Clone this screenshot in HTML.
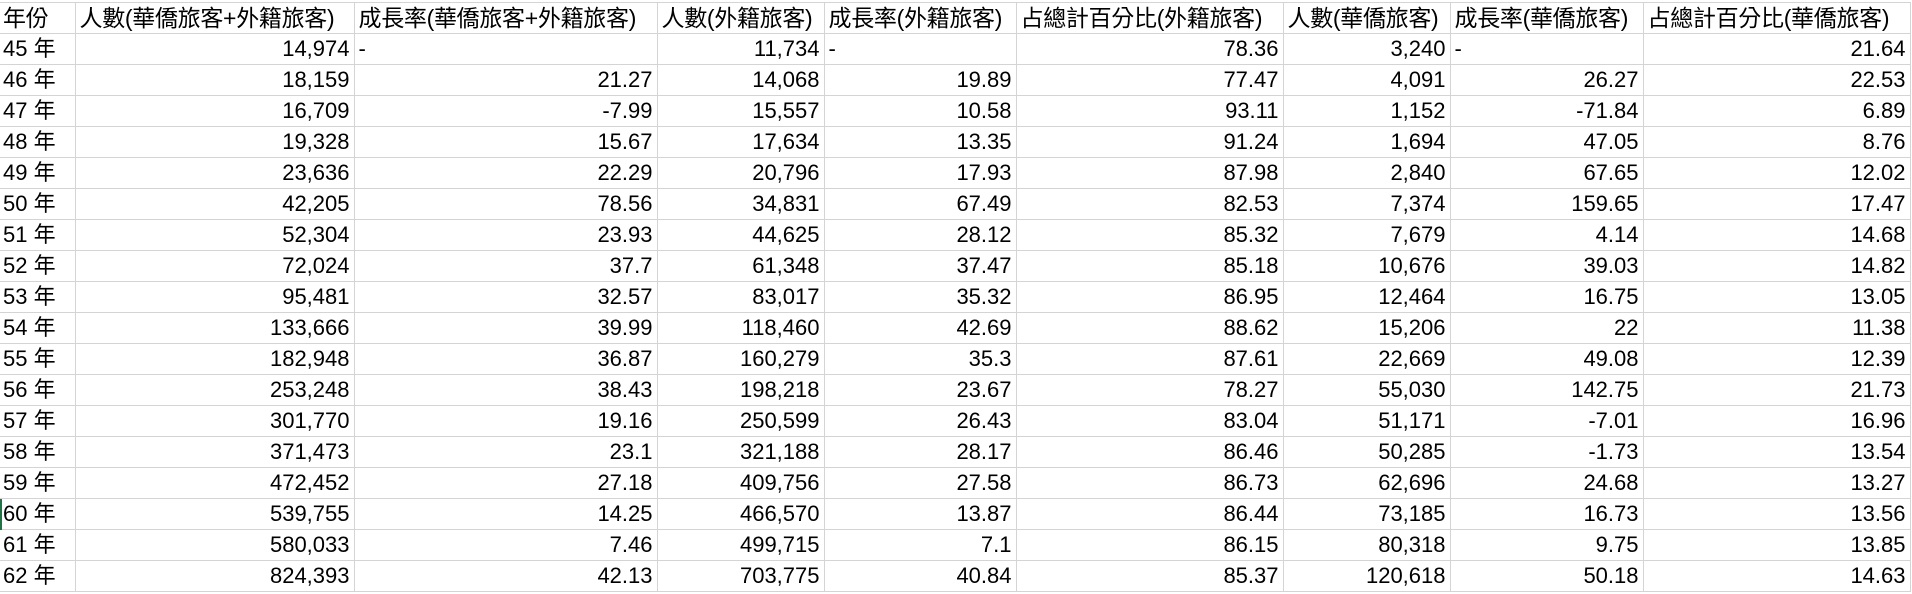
<!DOCTYPE html>
<html><head><meta charset="utf-8"><style>
html,body{margin:0;padding:0;background:#fff;width:1912px;height:594px;overflow:hidden}
table{position:absolute;left:0;top:2px;width:1910px;border-collapse:collapse;table-layout:fixed;font-family:"Liberation Sans","Noto Sans CJK TC",sans-serif;font-size:22px;color:#000}
td{border:1px solid #d4d4d4;height:30px;line-height:30px;padding:0 4px;white-space:nowrap;overflow:hidden;text-align:right;box-sizing:border-box}
td.l{text-align:left}
tr:first-child td{font-size:23px;line-height:30px;text-align:left;letter-spacing:-0.3px}
td:first-child{border-left:none;text-align:left;padding-left:3px}
.g{position:absolute;left:0;top:499px;width:2px;height:31px;background:#217346}
</style></head><body>
<table>
<colgroup><col style="width:75px"><col style="width:279px"><col style="width:303px"><col style="width:167px"><col style="width:192px"><col style="width:267px"><col style="width:167px"><col style="width:193px"><col style="width:267px"></colgroup>
<tr><td>年份</td><td>人數(華僑旅客+外籍旅客)</td><td>成長率(華僑旅客+外籍旅客)</td><td>人數(外籍旅客)</td><td>成長率(外籍旅客)</td><td>占總計百分比(外籍旅客)</td><td>人數(華僑旅客)</td><td>成長率(華僑旅客)</td><td>占總計百分比(華僑旅客)</td></tr>
<tr><td>45 年</td><td>14,974</td><td class="l">-</td><td>11,734</td><td class="l">-</td><td>78.36</td><td>3,240</td><td class="l">-</td><td>21.64</td></tr>
<tr><td>46 年</td><td>18,159</td><td>21.27</td><td>14,068</td><td>19.89</td><td>77.47</td><td>4,091</td><td>26.27</td><td>22.53</td></tr>
<tr><td>47 年</td><td>16,709</td><td>-7.99</td><td>15,557</td><td>10.58</td><td>93.11</td><td>1,152</td><td>-71.84</td><td>6.89</td></tr>
<tr><td>48 年</td><td>19,328</td><td>15.67</td><td>17,634</td><td>13.35</td><td>91.24</td><td>1,694</td><td>47.05</td><td>8.76</td></tr>
<tr><td>49 年</td><td>23,636</td><td>22.29</td><td>20,796</td><td>17.93</td><td>87.98</td><td>2,840</td><td>67.65</td><td>12.02</td></tr>
<tr><td>50 年</td><td>42,205</td><td>78.56</td><td>34,831</td><td>67.49</td><td>82.53</td><td>7,374</td><td>159.65</td><td>17.47</td></tr>
<tr><td>51 年</td><td>52,304</td><td>23.93</td><td>44,625</td><td>28.12</td><td>85.32</td><td>7,679</td><td>4.14</td><td>14.68</td></tr>
<tr><td>52 年</td><td>72,024</td><td>37.7</td><td>61,348</td><td>37.47</td><td>85.18</td><td>10,676</td><td>39.03</td><td>14.82</td></tr>
<tr><td>53 年</td><td>95,481</td><td>32.57</td><td>83,017</td><td>35.32</td><td>86.95</td><td>12,464</td><td>16.75</td><td>13.05</td></tr>
<tr><td>54 年</td><td>133,666</td><td>39.99</td><td>118,460</td><td>42.69</td><td>88.62</td><td>15,206</td><td>22</td><td>11.38</td></tr>
<tr><td>55 年</td><td>182,948</td><td>36.87</td><td>160,279</td><td>35.3</td><td>87.61</td><td>22,669</td><td>49.08</td><td>12.39</td></tr>
<tr><td>56 年</td><td>253,248</td><td>38.43</td><td>198,218</td><td>23.67</td><td>78.27</td><td>55,030</td><td>142.75</td><td>21.73</td></tr>
<tr><td>57 年</td><td>301,770</td><td>19.16</td><td>250,599</td><td>26.43</td><td>83.04</td><td>51,171</td><td>-7.01</td><td>16.96</td></tr>
<tr><td>58 年</td><td>371,473</td><td>23.1</td><td>321,188</td><td>28.17</td><td>86.46</td><td>50,285</td><td>-1.73</td><td>13.54</td></tr>
<tr><td>59 年</td><td>472,452</td><td>27.18</td><td>409,756</td><td>27.58</td><td>86.73</td><td>62,696</td><td>24.68</td><td>13.27</td></tr>
<tr><td>60 年</td><td>539,755</td><td>14.25</td><td>466,570</td><td>13.87</td><td>86.44</td><td>73,185</td><td>16.73</td><td>13.56</td></tr>
<tr><td>61 年</td><td>580,033</td><td>7.46</td><td>499,715</td><td>7.1</td><td>86.15</td><td>80,318</td><td>9.75</td><td>13.85</td></tr>
<tr><td>62 年</td><td>824,393</td><td>42.13</td><td>703,775</td><td>40.84</td><td>85.37</td><td>120,618</td><td>50.18</td><td>14.63</td></tr>
</table>
<div class="g"></div>
</body></html>
